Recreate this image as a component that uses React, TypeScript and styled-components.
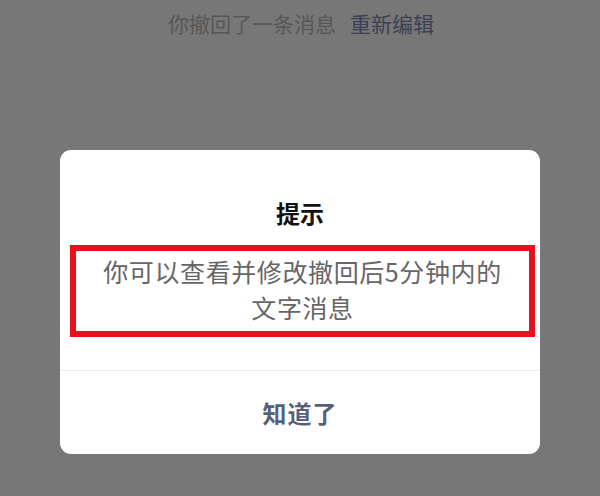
import React from 'react'
import styled, { createGlobalStyle } from 'styled-components'

const GlobalStyle = createGlobalStyle`
  html, body {
    margin: 0;
    padding: 0;
    background: #777777;
  }
  body {
    font-family: "Noto Sans CJK SC", "Noto Sans", sans-serif;
  }
`

const App = () => {
  return (
    <Page>
      <GlobalStyle />
      <Notice>
        <span className="notice-text">你撤回了一条消息</span>
        <span className="notice-link">重新编辑</span>
      </Notice>

      <Dialog>
        <Title>提示</Title>
        <Highlight>
          <Message>
            你可以查看并修改撤回后5分钟内的
            <br />
            文字消息
          </Message>
        </Highlight>
        <Footer>
          <ActionButton>知道了</ActionButton>
        </Footer>
      </Dialog>
    </Page>
  )
}

const Page = styled.div`
  width: 600px;
  height: 496px;
  overflow: hidden;
  background: #777777;
  display: flex;
  flex-direction: column;
`

const Notice = styled.div`
  display: flex;
  justify-content: center;
  gap: 14px;
  padding-top: 11px;
  padding-left: 2px;
  font-size: 21px;
  line-height: 24px;
  .notice-text {
    color: #575757;
  }
  .notice-link {
    color: #3a3f52;
  }
`

const Dialog = styled.div`
  width: 480px;
  margin: 115px auto 0;
  background: #ffffff;
  border-radius: 11px;
  display: flex;
  flex-direction: column;
`

const Title = styled.div`
  padding-top: 51px;
  text-align: center;
  font-size: 24px;
  line-height: 24px;
  font-weight: 700;
  color: #111111;
`

const Highlight = styled.div`
  margin: 20px 5px 0 10px;
  border: 6px solid #e8101a;
  padding: 2px 0 6px;
`

const Message = styled.div`
  text-align: center;
  font-size: 25px;
  line-height: 36px;
  letter-spacing: 0.6px;
  color: #666666;
`

const Footer = styled.div`
  margin-top: 33px;
  border-top: 1px solid #ececec;
  height: 83px;
  display: flex;
  align-items: center;
  justify-content: center;
`

const ActionButton = styled.div`
  font-size: 24px;
  font-weight: 700;
  letter-spacing: 1px;
  color: #566079;
  cursor: pointer;
`

export default App
